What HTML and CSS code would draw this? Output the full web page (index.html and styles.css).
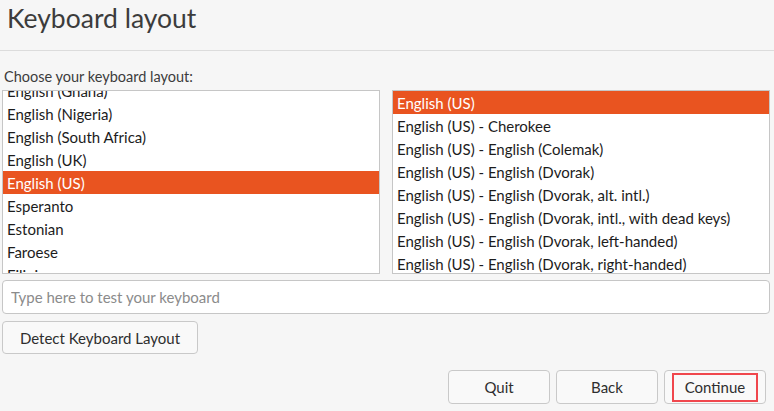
FILE: index.html
```html
<!DOCTYPE html>
<html>
<head>
<meta charset="utf-8">
<link rel="stylesheet" href="styles.css">
</head>
<body>
<div class="window">
  <header class="header">
    <h1 class="title">Keyboard layout</h1>
  </header>
  <div class="content">
    <div class="label">Choose your keyboard layout:</div>
    <div class="lists">
      <div class="list">
        <ul class="items items-scrolled">
          <li class="item">English (Ghana)</li>
          <li class="item">English (Nigeria)</li>
          <li class="item">English (South Africa)</li>
          <li class="item">English (UK)</li>
          <li class="item selected">English (US)</li>
          <li class="item">Esperanto</li>
          <li class="item">Estonian</li>
          <li class="item">Faroese</li>
          <li class="item">Filipino</li>
        </ul>
      </div>
      <div class="list">
        <ul class="items">
          <li class="item selected">English (US)</li>
          <li class="item">English (US) - Cherokee</li>
          <li class="item">English (US) - English (Colemak)</li>
          <li class="item">English (US) - English (Dvorak)</li>
          <li class="item">English (US) - English (Dvorak, alt. intl.)</li>
          <li class="item">English (US) - English (Dvorak, intl., with dead keys)</li>
          <li class="item">English (US) - English (Dvorak, left-handed)</li>
          <li class="item">English (US) - English (Dvorak, right-handed)</li>
          <li class="item">English (US) - English (Macintosh)</li>
        </ul>
      </div>
    </div>
    <input class="test-input" type="text" placeholder="Type here to test your keyboard">
    <div class="detect-row">
      <button class="btn detect">Detect Keyboard Layout</button>
    </div>
    <div class="actions">
      <button class="btn action">Quit</button>
      <button class="btn action">Back</button>
      <button class="btn action continue"><span class="focus">Continue</span></button>
    </div>
  </div>
</div>
</body>
</html>
```

FILE: styles.css
```css
html, body {
  margin: 0;
  padding: 0;
  background: #f6f6f6;
}
body {
  font-family: Lato, "Noto Sans", sans-serif;
  font-size: 15px;
  color: #3c3c3c;
  width: 774px;
  height: 411px;
  overflow: hidden;
}
.header {
  height: 50px;
  border-bottom: 1px solid #dcdcdc;
  box-sizing: content-box;
}
.title {
  margin: 0;
  padding: 1px 0 0 7px;
  font-size: 26.5px;
  font-weight: 400;
  line-height: 34px;
  color: #3c3c3c;
}
.content {
  padding: 0 5px 0 2px;
}
.label {
  margin-top: 16px;
  height: 20px;
  line-height: 20px;
  padding-left: 2px;
  font-size: 14.5px;
  color: #3c3c3c;
}
.lists {
  margin-top: 3px;
  display: grid;
  grid-template-columns: 378px 378px;
  column-gap: 12px;
}
.list {
  height: 184px;
  box-sizing: border-box;
  border: 1px solid #c6c6c6;
  background: #ffffff;
  overflow: hidden;
}
.items {
  list-style: none;
  margin: 0;
  padding: 0;
}
.items-scrolled {
  margin-top: -12px;
}
.item {
  height: 23px;
  line-height: 24px;
  padding-left: 4px;
  color: #1c1c1c;
  white-space: nowrap;
}
.item.selected {
  background: #e95420;
  color: #ffffff;
}
.test-input {
  display: block;
  margin-top: 6px;
  width: 768px;
  height: 34px;
  box-sizing: border-box;
  border: 1px solid #c6c6c6;
  border-radius: 4px;
  background: #ffffff;
  padding: 0 8px;
  font-family: inherit;
  font-size: 15px;
  color: #3c3c3c;
  outline: none;
}
.test-input::placeholder {
  color: #8b8b8b;
}
.detect-row {
  margin-top: 7px;
}
.btn {
  font-family: inherit;
  font-size: 15px;
  color: #2e2e2e;
  background: #f9f9f9;
  border: 1px solid #c9c9c9;
  border-radius: 4px;
  box-sizing: border-box;
  padding: 0;
  cursor: default;
}
.detect {
  width: 196px;
  height: 33px;
}
.actions {
  margin-top: 16px;
  display: flex;
  justify-content: flex-end;
  gap: 6px;
  padding-right: 3px;
}
.action {
  width: 102px;
  height: 34px;
}
.continue {
  display: flex;
  align-items: center;
  justify-content: center;
}
.focus {
  display: block;
  width: 86px;
  height: 29px;
  line-height: 25px;
  box-sizing: border-box;
  border: 2px solid #f0474d;
}
```
